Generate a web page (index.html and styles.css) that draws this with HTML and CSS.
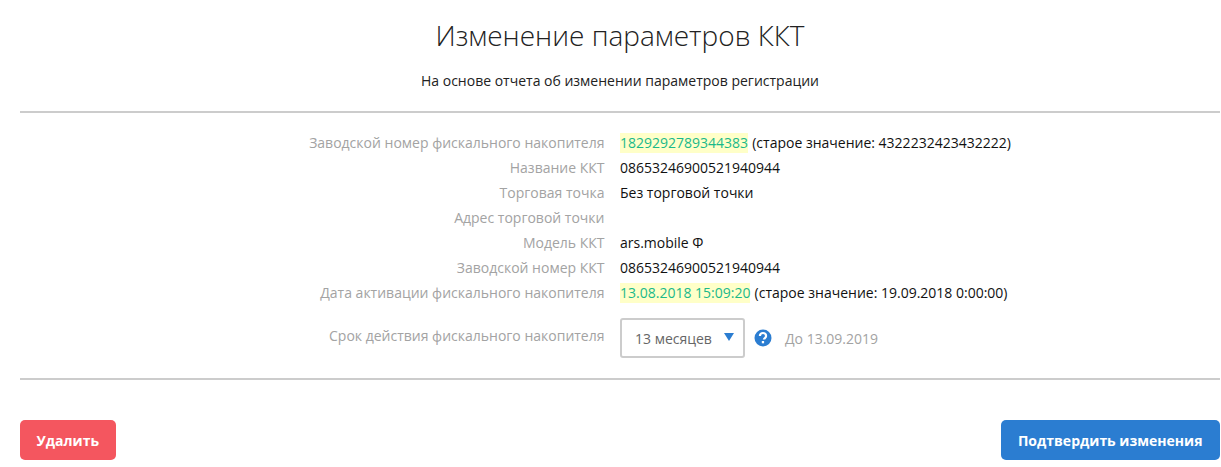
FILE: index.html
```html
<!DOCTYPE html>
<html lang="ru">
<head>
  <meta charset="UTF-8">
  <title>Изменение параметров ККТ</title>
  <link rel="stylesheet" href="styles.css">
</head>
<body>
  <div class="container">
    <div class="header">
      <h1>Изменение параметров ККТ</h1>
      <p>На основе отчета об изменении параметров регистрации</p>
    </div>
    <div class="params">
      <div class="param-label">Заводской номер фискального накопителя</div>
      <div class="param-value"><span class="changed">1829292789344383</span> <span class="old">(старое значение: 4322232423432222)</span></div>
      <div class="param-label">Название ККТ</div>
      <div class="param-value">08653246900521940944</div>
      <div class="param-label">Торговая точка</div>
      <div class="param-value">Без торговой точки</div>
      <div class="param-label">Адрес торговой точки</div>
      <div class="param-value"></div>
      <div class="param-label">Модель ККТ</div>
      <div class="param-value">ars.mobile Ф</div>
      <div class="param-label">Заводской номер ККТ</div>
      <div class="param-value">08653246900521940944</div>
      <div class="param-label">Дата активации фискального накопителя</div>
      <div class="param-value"><span class="changed">13.08.2018 15:09:20</span> <span class="old">(старое значение: 19.09.2018 0:00:00)</span></div>
      <div class="param-label term-label">Срок действия фискального накопителя</div>
      <div class="term">
        <div class="select">13 месяцев<span class="select-arrow"></span></div>
        <svg class="help" width="18" height="18" viewBox="0 0 18 18">
          <circle cx="9" cy="9" r="8.5" fill="#2b7dd1"/>
          <path d="M5.9 7a3.1 3 0 0 1 6.2 0c0 2-2.2 2.1-2.2 3.6" fill="none" stroke="#fff" stroke-width="2.2"/>
          <rect x="7.8" y="12" width="2.3" height="2.3" fill="#fff"/>
        </svg>
        <span class="term-date">До 13.09.2019</span>
      </div>
    </div>
    <div class="actions">
      <button type="button" class="btn btn-red">Удалить</button>
      <button type="button" class="btn btn-blue">Подтвердить изменения</button>
    </div>
  </div>
</body>
</html>
```
FILE: styles.css
```css
body {
  margin: 0;
  padding: 0;
  background: #fff;
  font-family: "Open Sans", sans-serif;
  font-size: 14px;
  color: #111;
}

.container {
  width: 1200px;
  margin-left: 20px;
}

.header {
  text-align: center;
  height: 111px;
  border-bottom: 2px solid #ccc;
}

.header h1 {
  margin: 0;
  padding-top: 16px;
  font-size: 28px;
  line-height: 38px;
  font-weight: 300;
  color: #222;
}

.header p {
  margin: 17px 0 0;
  line-height: 20px;
  color: #222;
}

.params {
  display: grid;
  grid-template-columns: 584.5px 1fr;
  grid-template-rows: repeat(7, 25px) 53px;
  column-gap: 15.5px;
  padding: 17px 0 20px;
  border-bottom: 2px solid #ccc;
}

.param-label {
  text-align: right;
  line-height: 25px;
  color: #a3a3a3;
}

.param-value {
  line-height: 25px;
}

.changed {
  display: inline-block;
  line-height: 20px;
  background: #ffffc8;
  color: #1ab98a;
}

.old {
  margin-left: 0.5px;
}

.term-label {
  margin-top: 18px;
}

.term {
  display: flex;
  align-items: center;
  height: 40px;
  margin-top: 13px;
}

.select {
  position: relative;
  box-sizing: border-box;
  width: 125px;
  height: 40px;
  padding-left: 13px;
  line-height: 37px;
  border: 2px solid #ccc;
  border-radius: 3px;
  color: #666;
}

.select-arrow {
  position: absolute;
  top: 13px;
  right: 9px;
  border-left: 5px solid transparent;
  border-right: 5px solid transparent;
  border-top: 8px solid #2b7dd1;
}

.help {
  margin-left: 9px;
}

.term-date {
  margin-left: 13px;
  color: #a3a3a3;
}

.actions {
  display: flex;
  justify-content: space-between;
  margin-top: 40px;
}

.btn {
  height: 40px;
  padding: 0 17.5px 0 16.5px;
  border: none;
  border-radius: 5px;
  font-family: "Open Sans", sans-serif;
  font-size: 14px;
  font-weight: 700;
  color: #fff;
}

.btn-red {
  padding-right: 16.5px;
  background: #f4565f;
}

.btn-blue {
  background: #2b7dd1;
}
```
